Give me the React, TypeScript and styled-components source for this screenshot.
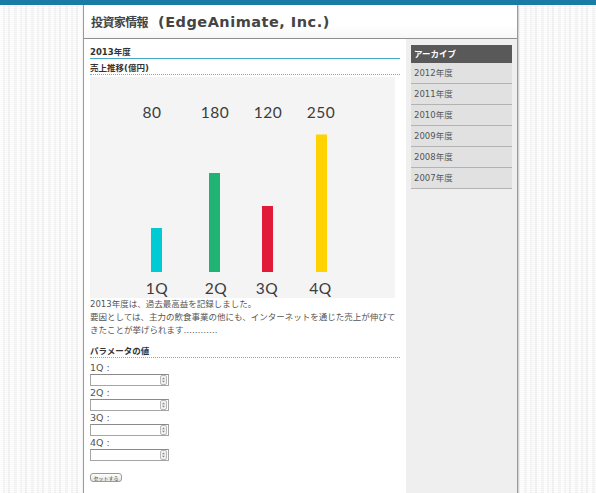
import React from "react";
import styled, { createGlobalStyle } from "styled-components";

const GlobalStyle = createGlobalStyle`
  html, body { margin: 0; padding: 0; }
  body {
    font-family: "DejaVu Sans", "Noto Sans CJK JP", sans-serif;
    background-color: #f3f3f3;
    background-image:
      linear-gradient(0deg, rgba(255,255,255,0.55) 1px, transparent 1px),
      repeating-linear-gradient(90deg,
        #fbfbfb 0 3px, #efefef 3px 5px, #f8f8f8 5px 8px,
        #ebebeb 8px 10px, #fafafa 10px 14px, #f0f0f0 14px 17px);
    background-size: 100% 2px, auto;
    min-height: 100vh;
  }
`;

const TopBar = styled.div`
  height: 5px;
  background: #1b7ba7;
`;

const Page = styled.div`
  width: 433px;
  margin-left: 83px;
  min-height: calc(100vh - 5px);
  background: #fff;
  border-left: 1px solid #9a9a9a;
  border-right: 1px solid #9a9a9a;
  box-shadow: 1px 0 0 #d4d4d4;
  display: flex;
  flex-direction: column;
`;

const Header = styled.header`
  height: 34px;
  box-sizing: border-box;
  padding: 10px 0 0 7px;
  border-bottom: 1px solid #8f8f8f;
  background: linear-gradient(#ffffff 60%, #f7f7f7);
`;

const Title = styled.h1`
  margin: 0;
  font-size: 14.5px;
  line-height: 15px;
  font-weight: bold;
  color: #444;
  letter-spacing: 0.5px;
  white-space: nowrap;
`;

const TitleJa = styled.span`
  font-size: 12px;
  letter-spacing: -0.6px;
  margin-right: 10px;
`;

const Body = styled.div`
  flex: 1;
  display: flex;
`;

const Main = styled.main`
  width: 322px;
  box-sizing: border-box;
  padding: 7px 6px 0 6px;
`;

const SectionTitle = styled.h2`
  margin: 0;
  font-size: 8.5px;
  line-height: 12px;
  font-weight: bold;
  color: #333;
  border-bottom: 1px solid #46a8cb;
`;

const SubTitle = styled.h3<{ $gap: number }>`
  margin: ${(p) => p.$gap}px 0 0 0;
  font-size: 8.5px;
  line-height: 12px;
  font-weight: bold;
  color: #333;
  border-bottom: 1px dotted #62b8d4;
`;

const ChartBox = styled.div`
  margin-top: 2px;
  width: 305px;
  height: 221px;
  background: #f4f4f4;
`;

const Text = styled.p`
  margin: 0;
  font-size: 8.5px;
  line-height: 13px;
  color: #555;
`;

const Form = styled.form`
  margin-top: 3px;
  display: flex;
  flex-direction: column;
`;

const FieldLabel = styled.label`
  font-size: 9.5px;
  line-height: 13px;
  color: #555;
`;

const InputBox = styled.div`
  width: 79px;
  height: 12px;
  box-sizing: border-box;
  border: 1px solid #a5a5a5;
  border-top-color: #8a8a8a;
  background: #fff;
  display: flex;
  align-items: center;
  padding-right: 1px;
`;

const NumberInput = styled.input`
  flex: 1;
  min-width: 0;
  height: 100%;
  border: 0;
  padding: 0;
  outline: none;
  background: transparent;
  font-size: 8px;
`;

const Spinner = styled.div`
  width: 5px;
  height: 8px;
  border: 1px solid #b8b8b8;
  border-radius: 2px;
  background: #f2f2f2;
  display: flex;
  align-items: center;
  justify-content: center;
`;

const SubmitButton = styled.button`
  margin-top: 12px;
  align-self: flex-start;
  width: 32px;
  height: 9px;
  padding: 0;
  border: 1px solid #9a9a9a;
  border-radius: 3px;
  background: linear-gradient(#ffffff, #e4e4e4);
  font-family: "Noto Sans CJK JP", sans-serif;
  font-size: 5px;
  line-height: 7px;
  color: #444;
`;

const Sidebar = styled.aside`
  flex: 1;
  background: #efefef;
  padding: 6px 5px 0 5px;
`;

const MenuHead = styled.div`
  height: 18px;
  line-height: 18px;
  background: #595959;
  color: #fff;
  font-size: 8.5px;
  font-weight: bold;
  padding-left: 3px;
`;

const MenuItem = styled.div`
  height: 20px;
  line-height: 20px;
  background: #e1e1e1;
  border-bottom: 1px solid #b3b3b3;
  color: #555;
  font-size: 8.5px;
  padding-left: 3px;
`;

const quarters = [
  { q: "1Q", value: 80, color: "#00cbd5", x: 66.5, vx: 62, lx: 67 },
  { q: "2Q", value: 180, color: "#21b374", x: 124.5, vx: 125, lx: 126 },
  { q: "3Q", value: 120, color: "#e21a3a", x: 177.5, vx: 178, lx: 177 },
  { q: "4Q", value: 250, color: "#fed300", x: 231.5, vx: 231, lx: 230.5 },
];

const Chart = () => (
  <svg width="305" height="221" viewBox="0 0 305 221">
    {quarters.map((d) => {
      const h = d.value * 0.55;
      return (
        <g key={d.q}>
          <text
            x={d.vx}
            y={40.5}
            textAnchor="middle"
            fontFamily="Lato, 'DejaVu Sans', sans-serif"
            fontWeight="400"
            fontSize="15.5"
            letterSpacing="0.5"
            fill="#3c3c3c"
          >
            {d.value}
          </text>
          <rect x={d.x - 5.5} y={195 - h} width={11} height={h} fill={d.color} />
          <text
            x={d.lx}
            y={216.5}
            textAnchor="middle"
            fontFamily="Lato, 'DejaVu Sans', sans-serif"
            fontWeight="400"
            fontSize="15.5"
            letterSpacing="0.5"
            fill="#3c3c3c"
          >
            {d.q}
          </text>
        </g>
      );
    })}
  </svg>
);

const SpinIcon = () => (
  <svg width="3" height="6" viewBox="0 0 3 6">
    <path d="M0 2.2 L1.5 0.6 L3 2.2 Z M0 3.8 L1.5 5.4 L3 3.8 Z" fill="#888" />
  </svg>
);

const years = ["2012", "2011", "2010", "2009", "2008", "2007"];

export default function App() {
  return (
    <>
      <GlobalStyle />
      <TopBar />
      <Page>
        <Header>
          <Title>
            <TitleJa>投資家情報</TitleJa>(EdgeAnimate, Inc.)
          </Title>
        </Header>
        <Body>
          <Main>
            <SectionTitle>2013年度</SectionTitle>
            <SubTitle $gap={3}>売上推移(億円)</SubTitle>
            <ChartBox>
              <Chart />
            </ChartBox>
            <Text>
              2013年度は、過去最高益を記録しました。
              <br />
              要因としては、主力の飲食事業の他にも、インターネットを通じた売上が伸びてきたことが挙げられます…………
            </Text>
            <SubTitle $gap={8}>パラメータの値</SubTitle>
            <Form onSubmit={(e) => e.preventDefault()}>
              {quarters.map((d) => (
                <React.Fragment key={d.q}>
                  <FieldLabel>{d.q} :</FieldLabel>
                  <InputBox>
                    <NumberInput type="text" />
                    <Spinner>
                      <SpinIcon />
                    </Spinner>
                  </InputBox>
                </React.Fragment>
              ))}
              <SubmitButton type="submit">セットする</SubmitButton>
            </Form>
          </Main>
          <Sidebar>
            <MenuHead>アーカイブ</MenuHead>
            {years.map((y) => (
              <MenuItem key={y}>{y}年度</MenuItem>
            ))}
          </Sidebar>
        </Body>
      </Page>
    </>
  );
}
